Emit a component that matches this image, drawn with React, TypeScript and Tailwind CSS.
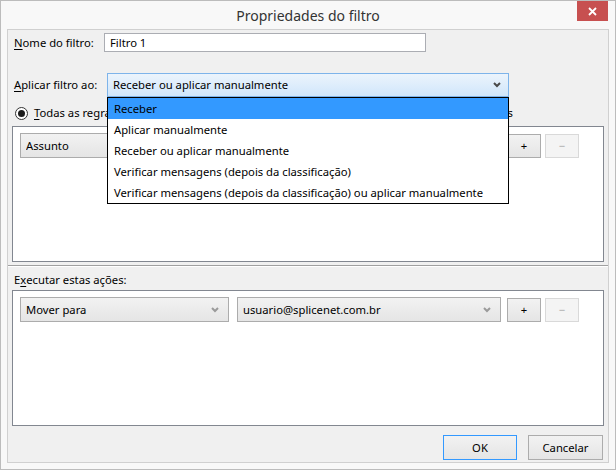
import React from "react";

const items = [
  "Receber",
  "Aplicar manualmente",
  "Receber ou aplicar manualmente",
  "Verificar mensagens (depois da classificação)",
  "Verificar mensagens (depois da classificação) ou aplicar manualmente",
];

function Chevron({ dark }: { dark?: boolean }) {
  return (
    <svg width="8" height="6" viewBox="0 0 8 6" className="shrink-0">
      <polyline
        points="1,1 4,4 7,1"
        fill="none"
        stroke={dark ? "#4a4a4a" : "#9a9a9a"}
        strokeWidth="2"
      />
    </svg>
  );
}

function Combo({ text, w }: { text: string; w: string }) {
  return (
    <div
      className={`flex items-center h-[25px] ${w} border border-[#acacac] bg-linear-to-b from-[#f2f2f2] to-[#e5e5e5] pl-[5px] pr-[9px]`}
    >
      <span className="flex-1 leading-[16px] whitespace-nowrap overflow-hidden">{text}</span>
      <Chevron />
    </div>
  );
}

function SmallButton({ label, disabled }: { label: string; disabled?: boolean }) {
  return (
    <div
      className={
        disabled
          ? "flex items-center justify-center w-[34px] h-[24px] border border-[#d9d9d9] bg-[#f4f4f4] text-[#a8a8a8]"
          : "flex items-center justify-center w-[34px] h-[24px] border border-[#acacac] bg-linear-to-b from-[#f2f2f2] to-[#e5e5e5]"
      }
    >
      {label}
    </div>
  );
}

function RuleRow({ first, second }: { first: string; second: string }) {
  return (
    <div className="flex items-center mt-[6px] pl-[7px]">
      <Combo text={first} w="w-[209px]" />
      <div className="ml-[8px]">
        <Combo text={second} w="w-[264px]" />
      </div>
      <div className="ml-[6px]">
        <SmallButton label="+" />
      </div>
      <div className="ml-[4px]">
        <SmallButton label="−" disabled />
      </div>
    </div>
  );
}

export default function App() {
  return (
    <div className="w-[616px] h-[470px] flex flex-col bg-[#f8f8f8] border border-[#bcbcbc] text-[11.25px] text-black font-['Noto_Sans',sans-serif] leading-[16px] select-none">
      {/* title bar */}
      <div className="grid grid-cols-[1fr_auto_1fr] h-[28px] shrink-0">
        <div />
        <div className="self-center pt-[2px] text-[14px] text-[#333]">Propriedades do filtro</div>
        <div className="flex justify-end pr-[7px]">
          <div className="w-[31px] h-[20px] bg-[#c75050] flex items-center justify-center">
            <svg width="9" height="9" viewBox="0 0 9 9">
              <path d="M1 1 L8 8 M8 1 L1 8" stroke="white" strokeWidth="1.8" />
            </svg>
          </div>
        </div>
      </div>

      {/* dialog body */}
      <div className="flex-1 mx-[6px] mb-[6px] border border-[#d0d0d0] bg-[#f0f0f0] flex flex-col">
        <div className="flex items-center mt-[3px] pl-[6px]">
          <div className="w-[90px]">
            <u className="underline-offset-2">N</u>ome do filtro:
          </div>
          <div className="w-[322px] h-[19px] border border-[#abadb3] bg-white flex items-center pl-[5px]">
            Filtro 1
          </div>
        </div>

        <div className="flex items-center mt-[21px] pl-[6px]">
          <div className="w-[93px]">
            <u className="underline-offset-2">A</u>plicar filtro ao:
          </div>
          <div className="relative">
            <div className="flex items-center w-[402px] h-[24px] border border-[#7eb4ea] bg-linear-to-b from-[#ecf4fc] to-[#d0e6fb] pl-[5px] pr-[7px]">
              <span className="flex-1">Receber ou aplicar manualmente</span>
              <Chevron dark />
            </div>
            <div className="absolute left-0 top-full z-10 w-[402px] border border-black bg-white flex flex-col">
              {items.map((t, i) => (
                <div
                  key={t}
                  className={
                    i === 0
                      ? "h-[21px] flex items-center pl-[6px] bg-[#3399ff]"
                      : "h-[21px] flex items-center pl-[6px]"
                  }
                >
                  {t}
                </div>
              ))}
            </div>
          </div>
        </div>

        <div className="flex items-center justify-between w-[505px] mt-[8px] pl-[7px] h-[16px]">
          <div className="flex items-center">
            <div className="w-[13px] h-[13px] rounded-full border border-[#333] bg-white flex items-center justify-center">
              <div className="w-[7px] h-[7px] rounded-full bg-[#1c1c1c]" />
            </div>
            <span className="ml-[6px]">
              <u className="underline-offset-2">T</u>odas as regras devem ser satisfeitas
            </span>
          </div>
          <div className="flex items-center">
            <div className="w-[13px] h-[13px] rounded-full border border-[#333] bg-white" />
            <span className="ml-[6px]">Qualquer uma das regras</span>
          </div>
        </div>

        <div className="mt-[5px] mx-[4px] h-[136px] border border-[#828790] bg-white">
          <RuleRow first="Assunto" second="contém" />
        </div>

        <div className="mt-[3px] border-t border-[#a0a0a0] border-b border-b-white" />

        <div className="mt-[5px] pl-[6px] h-[16px] flex items-center">
          E<u className="underline-offset-2">x</u>ecutar estas ações:
        </div>

        <div className="mt-[2px] mx-[4px] h-[136px] border border-[#828790] bg-white">
          <RuleRow first="Mover para" second="usuario@splicenet.com.br" />
        </div>

        <div className="flex justify-end gap-[11px] mt-[9px] pr-[5px]">
          <div className="w-[74px] h-[25px] border border-[#3399ff] bg-linear-to-b from-[#f2f2f2] to-[#e5e5e5] flex items-center justify-center">
            OK
          </div>
          <div className="w-[75px] h-[25px] border border-[#acacac] bg-linear-to-b from-[#f2f2f2] to-[#e5e5e5] flex items-center justify-center">
            Cancelar
          </div>
        </div>
      </div>
    </div>
  );
}
